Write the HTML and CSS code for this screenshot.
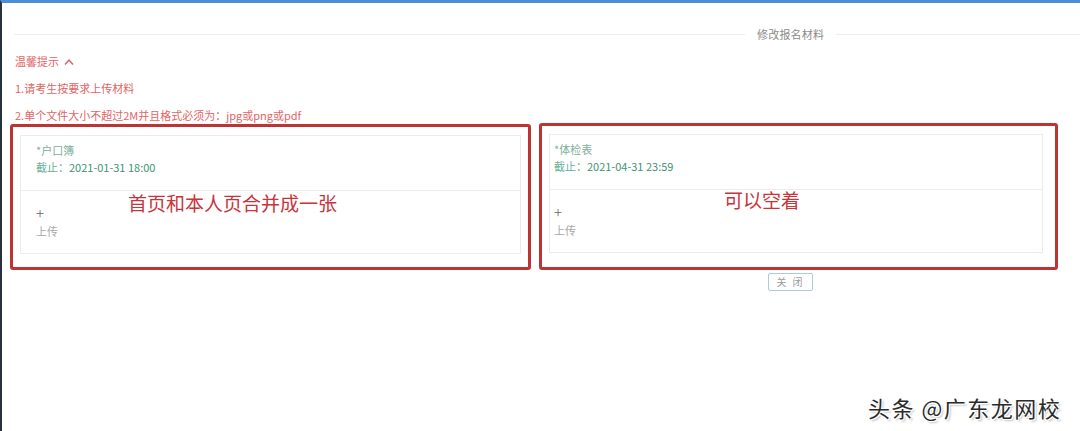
FILE: index.html
```html
<!DOCTYPE html>
<html lang="zh-CN">
<head>
  <meta charset="UTF-8" />
  <title>修改报名材料</title>
  <link rel="stylesheet" href="styles.css">
</head>
<body>

<div class="page">
  <!-- 标题 -->
  <div class="title-row">
    <span class="title-line left"></span>
    <span class="title-text">修改报名材料</span>
    <span class="title-line right"></span>
  </div>

  <!-- 温馨提示 -->
  <div class="tips">
    <div class="tip">温馨提示
      <svg class="chevron" width="10" height="8" viewBox="0 0 10 8"><path d="M1 6.5 L5 2 L9 6.5" fill="none" stroke="#e15b5b" stroke-width="1.4"/></svg>
    </div>
    <div class="tip">1.请考生按要求上传材料</div>
    <div class="tip">2.单个文件大小不超过2M并且格式必须为：jpg或png或pdf</div>
  </div>

  <!-- 材料 -->
  <div class="cards">
    <div class="mark-box first">
      <div class="card">
        <div class="card-head">
          <div class="card-name">*户口簿</div>
          <div class="card-date"><span class="date-label">截止：</span>2021-01-31 18:00</div>
        </div>
        <div class="card-upload">
          <div class="plus">+</div>
          <div class="upload-text">上传</div>
        </div>
        <div class="note note-left">首页和本人页合并成一张</div>
      </div>
    </div>
    <div class="mark-box second">
      <div class="card tight">
        <div class="card-head">
          <div class="card-name">*体检表</div>
          <div class="card-date"><span class="date-label">截止：</span>2021-04-31 23:59</div>
        </div>
        <div class="card-upload">
          <div class="plus">+</div>
          <div class="upload-text">上传</div>
        </div>
        <div class="note note-right">可以空着</div>
      </div>
    </div>
  </div>

  <div class="footer">
    <button class="close-btn">关 闭</button>
  </div>
</div>

<div class="watermark">头条 @广东龙网校</div>

</body>
</html>
```

FILE: styles.css
```css
* {
  box-sizing: border-box;
}
html, body {
  margin: 0;
  padding: 0;
  height: 100%;
  background: white;
  font-family: "Noto Sans CJK SC", "Noto Sans", sans-serif;
}
body {
  border-top: 3px solid #4a8fd2;
  border-left: 2px solid #26333f;
  position: relative;
  overflow: hidden;
}

.page {
  padding-top: 23px;
}

.title-row {
  display: flex;
  align-items: center;
  height: 16px;
  padding-left: 12px;
}
.title-line {
  height: 1px;
  background: #ececec;
}
.title-line.left {
  width: 731px;
}
.title-line.right {
  flex: 1;
}
.title-text {
  font-size: 11px;
  color: #8a8a8a;
  padding: 0 12px;
  letter-spacing: 0.2px;
}

.tips {
  padding-left: 13px;
  margin-top: 10px;
}
.tip {
  font-size: 11px;
  line-height: 18px;
  color: #e26464;
  margin-bottom: 9px;
}
.tip:last-child {
  margin-bottom: 0;
}
.chevron {
  margin-left: 3px;
  vertical-align: 0;
}

.cards {
  display: flex;
  gap: 8px;
  margin-left: 8px;
}
.mark-box {
  border: 3px solid #bd3434;
  border-radius: 3px;
  padding: 8px 7px 13px;
}
.mark-box.first {
  width: 521px;
}
.mark-box.second {
  width: 519px;
  margin-top: -1px;
  padding-right: 12px;
}

.card {
  position: relative;
  border: 1px solid #ebebeb;
}
.card-head {
  padding: 6px 15px 14px;
  border-bottom: 1px solid #ebebeb;
  font-size: 11px;
  line-height: 17px;
}
.card.tight .card-head,
.card.tight .card-upload {
  padding-left: 4px;
}
.card-name {
  color: #7eae9b;
}
.card-date {
  color: #3f9273;
}
.date-label {
  color: #68b097;
}
.card-upload {
  padding: 13px 15px 13px;
  line-height: 18px;
}
.plus {
  font-size: 15px;
  font-weight: 300;
  color: #666;
}
.upload-text {
  font-size: 11px;
  color: #a8a8a8;
}

.note {
  position: absolute;
  font-size: 19px;
  line-height: 22px;
  color: #c9333a;
  white-space: nowrap;
}
.note-left {
  left: 107px;
  top: 56px;
}
.note-right {
  left: 174px;
  top: 54px;
}

.footer {
  display: flex;
  padding-left: 766px;
  margin-top: 3px;
}
.close-btn {
  width: 45px;
  height: 18px;
  padding: 0;
  border: 1px solid #a9cfd3;
  border-radius: 2px;
  background: white;
  color: #9a9a9a;
  font-family: "Noto Sans CJK SC", sans-serif;
  font-size: 10px;
  line-height: 16px;
  letter-spacing: 2px;
}

.watermark {
  position: absolute;
  left: 866px;
  top: 389px;
  font-size: 22px;
  line-height: 30px;
  letter-spacing: 1.5px;
  color: #2b2b2b;
  text-shadow: 1px 1px 0 #fff, -1px -1px 0 #fff, 1px -1px 0 #fff, -1px 1px 0 #fff, 2px 2px 2px #bbb;
  white-space: nowrap;
}
```
